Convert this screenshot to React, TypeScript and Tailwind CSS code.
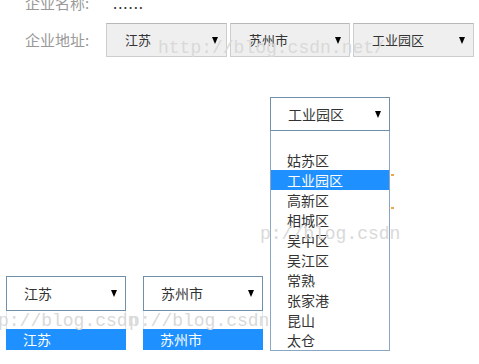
import React from "react";

const font = { fontFamily: '"Noto Sans CJK SC", "Noto Sans", sans-serif' };

const districts = ["姑苏区", "工业园区", "高新区", "相城区", "吴中区", "吴江区", "常熟", "张家港", "昆山", "太仓"];

function Arrow() {
  return <span className="w-0 h-0 border-l-[3.5px] border-r-[3.5px] border-t-[7px] border-l-transparent border-r-transparent border-t-black" />;
}

function FlatSelect({ value, width }: { value: string; width: string }) {
  return (
    <div className={`${width} h-[34px] flex items-center justify-between pl-[18px] pr-[8px] bg-[#efefef] border border-[#cdcdcd] border-t-[#b8b8b8] text-[13px] text-[#333]`}>
      <span>{value}</span>
      <Arrow />
    </div>
  );
}

function OpenSelect({ value, options, active }: { value: string; options: string[]; active: string }) {
  return (
    <div className="w-[120px] flex flex-col">
      <div className="h-[34px] flex items-center justify-between pl-[17px] pr-[8px] bg-white border border-[#6f8faa] text-[14px] text-[#333]">
        <span>{value}</span>
        <Arrow />
      </div>
      <div className="border-x border-b border-[#8aa6c4] text-[14px] text-[#333] leading-[20px]">
        <div className="h-[19px]" />
        {options.map((o) => (
          <div key={o} className={`h-[20px] pl-[16px] ${o === active ? "bg-[#1e90ff] text-white" : ""}`}>{o}</div>
        ))}
      </div>
    </div>
  );
}

function SmallOpen({ value }: { value: string }) {
  return (
    <div className="w-[120px] flex flex-col mb-[1px]">
      <div className="h-[35px] flex items-center justify-between pl-[17px] pr-[8px] bg-white border border-[#6f8faa] text-[14px] text-[#333]">
        <span>{value}</span>
        <Arrow />
      </div>
      <div className="h-[18px] border-x border-[#dfe6ee]" />
      <div className="h-[21px] pl-[17px] bg-[#1e90ff] text-white text-[14px] leading-[21px]">{value}</div>
    </div>
  );
}

export default function App() {
  return (
    <div className="relative w-[479px] h-[364px] overflow-hidden bg-white" style={font}>
      <div className="flex flex-col">
        <div className="-mt-[7px] h-[20px] flex items-center pl-[25px] text-[15px] text-[#999]">
          <span className="w-[88px]">企业名称:</span>
          <span className="text-[#333] tracking-[1px]">......</span>
        </div>
        <div className="mt-[10px] flex items-center pl-[25px]">
          <span className="w-[81px] text-[15px] text-[#999]">企业地址:</span>
          <FlatSelect value="江苏" width="w-[121px]" />
          <div className="ml-[3px]"><FlatSelect value="苏州市" width="w-[120px]" /></div>
          <div className="ml-[3px]"><FlatSelect value="工业园区" width="w-[121px]" /></div>
        </div>
        <div className="mt-[40px] flex items-end pl-[6px]">
          <SmallOpen value="江苏" />
          <div className="ml-[17px]"><SmallOpen value="苏州市" /></div>
          <div className="ml-[7px] relative">
            <OpenSelect value="工业园区" options={districts} active="工业园区" />
            <span className="absolute left-[121px] top-[77px] w-[3px] h-[2px] bg-[#e8a84a]" />
            <span className="absolute left-[121px] top-[110px] w-[3px] h-[2px] bg-[#e8a84a]" />
          </div>
        </div>
      </div>
      <div className="pointer-events-none absolute inset-0 text-[18px] text-[#d9d9d9]" style={{ fontFamily: '"Liberation Mono", monospace' }}>
        <span className="absolute left-[158px] top-[35px]">http://blog.csdn.net/</span>
        <span className="absolute left-[260px] top-[221px]">p://blog.csdn</span>
        <span className="absolute left-[-2px] top-[308px]">p://blog.csdn</span>
        <span className="absolute left-[129px] top-[308px]">p://blog.csdn</span>
      </div>
    </div>
  );
}
